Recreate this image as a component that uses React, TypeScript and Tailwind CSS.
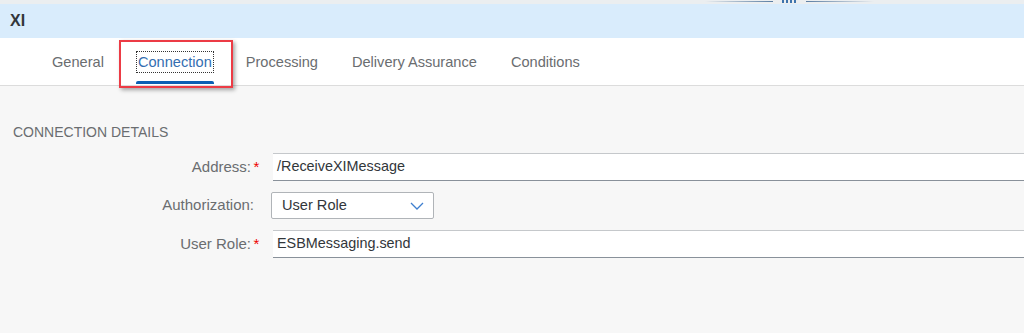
const tabs = ['General', 'Connection', 'Processing', 'Delivery Assurance', 'Conditions'];

function Label({ text, required }: { text: string; required?: boolean }) {
  return (
    <div className="w-[262px] shrink-0 flex justify-end items-center text-[15px] text-[#6a6d70]">
      <span>{text}</span>
      <span className={`w-[11px] text-center text-[#e00] ${required ? '' : 'invisible'}`}>*</span>
    </div>
  );
}

export default function App() {
  return (
    <div
      className="w-[1024px] h-[333px] overflow-hidden bg-[#f7f7f7] text-[#32363a]"
      style={{ fontFamily: '"Liberation Sans", Arial, sans-serif' }}>
      {/* splitter strip */}
      <div className="h-[4px] bg-[#ebeef0] relative">
        <div className="absolute left-[705px] top-[1px] w-[68px] h-[1px] bg-gradient-to-r from-transparent to-[#5b7ea3]" />
        <div className="absolute left-[782px] top-0 flex gap-[2px]">
          <div className="w-[2px] h-[3px] bg-[#3f74ad]" />
          <div className="w-[2px] h-[3px] bg-[#3f74ad]" />
          <div className="w-[2px] h-[3px] bg-[#3f74ad]" />
          <div className="w-[2px] h-[3px] bg-[#3f74ad]" />
        </div>
        <div className="absolute left-[806px] top-[1px] w-[68px] h-[1px] bg-gradient-to-r from-[#5b7ea3] to-transparent" />
      </div>

      {/* title bar */}
      <div className="h-[34px] bg-[#d9ecfc] flex items-center pl-[10px]">
        <span className="text-[16px] font-bold text-[#32363a]">XI</span>
      </div>

      {/* tabs */}
      <div className="h-[48px] bg-white border-b border-[#dcdcdc] flex items-stretch pl-[52px] gap-[34px] relative">
        {tabs.map((t) => {
          const active = t === 'Connection';
          return (
            <div key={t} className="relative flex items-center">
              <span
                className={`text-[14.6px] leading-[18px] ${
                  active ? 'text-[#346eb1] outline outline-1 outline-dotted outline-[#333] outline-offset-[1px]' : 'text-[#6a6d70]'
                }`}>
                {t}
              </span>
              {active && <div className="absolute left-[-2px] right-[-2px] bottom-[1px] h-[3px] bg-[#0a5fb4] rounded-t-[2px]" />}
            </div>
          );
        })}
        {/* highlight annotation */}
        <div className="absolute left-[119px] top-[2px] w-[114px] h-[48px] border-2 border-[#ec3b45] shadow-[2px_2px_4px_rgba(0,0,0,0.35)]" />
      </div>

      {/* content */}
      <div className="pt-[37px]">
        <div className="pl-[13px] text-[14px] text-[#6a6d70] uppercase leading-[18px]">Connection Details</div>
        <div className="mt-[12px] flex flex-col">
          <div className="flex items-center h-[28px]">
            <Label text="Address:" required />
            <div className="ml-[11px] flex-1 h-[28px] bg-white border-t border-[#c5c8cb] border-b border-b-[#89919a] flex items-center pl-[4px] text-[14.4px] text-[#32363a]">
              /ReceiveXIMessage
            </div>
          </div>
          <div className="flex items-center h-[27px] mt-[11px]">
            <div className="w-[262px] shrink-0 flex justify-end pr-[8px] text-[15px] text-[#6a6d70]">Authorization:</div>
            <div className="ml-[9px] w-[163px] h-[27px] bg-white border border-[#b0b4b8] rounded-[2px] flex items-center justify-between pl-[10px] pr-[9px] text-[14.6px] text-[#32363a]">
              <span>User Role</span>
              <svg width="14" height="8" viewBox="0 0 14 8" fill="none">
                <path d="M1 1l6 6 6-6" stroke="#3f7fcf" strokeWidth="1.3" />
              </svg>
            </div>
          </div>
          <div className="flex items-center h-[28px] mt-[11px]">
            <Label text="User Role:" required />
            <div className="ml-[11px] flex-1 h-[28px] bg-white border-t border-[#c5c8cb] border-b border-b-[#89919a] flex items-center pl-[4px] text-[14.4px] text-[#32363a]">
              ESBMessaging.send
            </div>
          </div>
        </div>
      </div>
    </div>
  );
}
